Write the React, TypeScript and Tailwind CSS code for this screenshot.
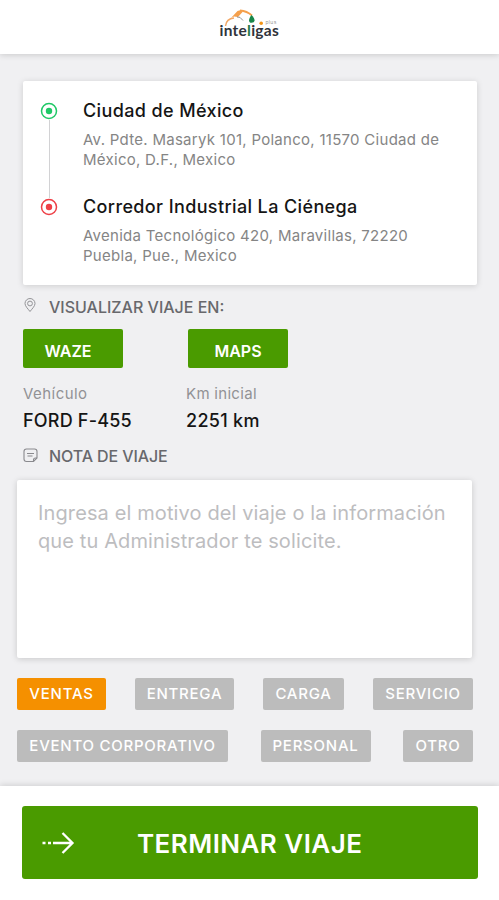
import React from 'react';
import clsx from 'clsx';

interface Stop {
  name: string;
  address: string[];
  color: string;
}

const stops: Stop[] = [
  {
    name: 'Ciudad de México',
    address: ['Av. Pdte. Masaryk 101, Polanco, 11570 Ciudad de', 'México, D.F., Mexico'],
    color: 'text-[#1fc866]',
  },
  {
    name: 'Corredor Industrial La Ciénega',
    address: ['Avenida Tecnológico 420, Maravillas, 72220', 'Puebla, Pue., Mexico'],
    color: 'text-[#ee3f46]',
  },
];

const reasons = [
  [
    { label: 'VENTAS', width: 'w-[89px]', active: true },
    { label: 'ENTREGA', width: 'w-[99px]' },
    { label: 'CARGA', width: 'w-[81px]' },
    { label: 'SERVICIO', width: 'w-[100px]' },
  ],
  [
    { label: 'EVENTO CORPORATIVO', width: 'w-[211px]' },
    { label: 'PERSONAL', width: 'w-[110px]' },
    { label: 'OTRO', width: 'w-[70px]' },
  ],
];

function Logo() {
  return (
    <div className="flex h-[34px] w-[60px] flex-col">
      <div className="flex h-[19px] items-end">
        <svg className="shrink-0" width="43" height="19" viewBox="0 0 43 19" fill="none">
          <path d="M5.500 19C6 14 8.500 11.500 14 11" stroke="#f3a866" strokeWidth="1.500" />
          <path d="M11 11L17.500 4L21 3L22.500 5L18 10L14 9.500Z" fill="#f5a04c" />
          <path d="M20 3.500Q27 4 32 8.500" stroke="#f5a04c" strokeWidth="1.800" />
          <path d="M17 10Q20 9 23 13.500" stroke="#888" strokeWidth="0.900" />
          <path d="M31.500 8C36.500 13 34.500 15.800 31.500 15.800C28.500 15.800 28 12.500 31.500 8Z" fill="#17864a" />
          <circle cx="41.200" cy="16.300" r="1.800" fill="#f39416" />
        </svg>
        <span className="mb-[2px] ml-[3px] text-[5px] leading-[4px] tracking-[0.3px] text-[#999]">plus</span>
      </div>
      <span className="-mt-[2px] font-['Lato',sans-serif] text-[15.500px] leading-3 font-bold tracking-[0.25px] whitespace-nowrap text-[#30343b]">
        inte<span className="text-[#267b49]">l</span>igas
      </span>
    </div>
  );
}

function StopMarker({ color }: { color: string }) {
  return (
    <svg className={clsx('block shrink-0', color)} width="18" height="18" viewBox="0 0 18 18" fill="none">
      <circle cx="9" cy="9" r="7.500" stroke="currentColor" strokeWidth="1.500" />
      <circle cx="9" cy="9" r="3.200" fill="currentColor" />
    </svg>
  );
}

function PinIcon() {
  return (
    <svg className="-mt-[3px]" width="12" height="15" viewBox="0 0 12 15" fill="none" stroke="#949498" strokeWidth="1">
      <path d="M6 13.500C3.500 10.300 1 8 1 5.500A5 5 0 0 1 11 5.500C11 8 8.500 10.300 6 13.500Z" />
      <circle cx="6" cy="5.500" r="2.400" />
    </svg>
  );
}

function NoteIcon() {
  return (
    <svg className="-mt-px" width="15" height="15" viewBox="0 0 15 15" fill="none" stroke="#8a8a8e" strokeWidth="1.100">
      <path d="M3.500 1H11.500Q14 1 14 3.500V10L10.500 13.500H3.500Q1 13.500 1 11V3.500Q1 1 3.500 1Z" />
      <path d="M10.500 13.500V12Q10.500 10 12.500 10H14M4 5.500H11M4.500 8H9.500" />
    </svg>
  );
}

function DottedArrow() {
  return (
    <svg width="33" height="24" viewBox="0 0 33 24" fill="none" stroke="#fff" strokeWidth="2.300">
      <path d="M0.500 12H3.500M6 12H9M11 12H30.500M20.500 2L30.500 12L20.500 22" />
    </svg>
  );
}

export default function App() {
  return (
    <div className="flex h-[900px] w-[499px] flex-col overflow-hidden bg-[#f0f0f2] font-['Inter',sans-serif]">
      <header className="flex h-[54px] shrink-0 justify-center bg-white pt-[7px] shadow-[0_1px_6px_rgba(0,0,0,0.16)]">
        <Logo />
      </header>

      <main className="h-[732px] shrink-0">
        <section className="mt-[27px] ml-[23px] flex h-[204px] w-[454px] rounded-[2px] bg-white pt-[21px] pl-[17px] shadow-[0_1px_6px_rgba(0,0,0,0.15)]">
          <div className="flex w-[18px] flex-col items-center">
            <StopMarker color={stops[0].color} />
            <div className="h-[78px] w-px bg-[#d2d2d4]" />
            <StopMarker color={stops[1].color} />
          </div>
          <div className="ml-[25px] flex flex-col">
            {stops.map((stop) => (
              <div key={stop.name} className="h-24 shrink-0">
                <h2 className="h-7 text-[18px] leading-[18px] font-medium tracking-[0.38px] whitespace-nowrap text-[#151515]">
                  {stop.name}
                </h2>
                {stop.address.map((line) => (
                  <p key={line} className="text-[15px] leading-5 tracking-[0.28px] whitespace-nowrap text-[#858585]">
                    {line}
                  </p>
                ))}
              </div>
            ))}
          </div>
        </section>

        <div className="mt-3 ml-6 flex h-5 items-center text-[16px] font-medium text-[#68686c]">
          <span className="w-[25px]"><PinIcon /></span>
          <span>VISUALIZAR VIAJE EN:</span>
        </div>

        <div className="mt-3 ml-[23px] flex gap-[65px]">
          {['WAZE', 'MAPS'].map((app) => (
            <button
              key={app}
              className="h-[39px] w-[100px] rounded-[2px] bg-[#4a9b00] pt-1 pr-[10px] text-[16px] font-semibold text-white last:pr-0"
            >
              {app}
            </button>
          ))}
        </div>

        <div className="mt-4 ml-[23px] flex">
          <div className="w-[163px]">
            <p className="text-[15px] leading-5 tracking-[0.45px] text-[#929295]">Vehículo</p>
            <p className="mt-[5px] text-[18px] leading-6 font-medium tracking-[0.2px] text-[#151515]">FORD F-455</p>
          </div>
          <div>
            <p className="text-[15px] leading-5 tracking-[0.3px] text-[#929295]">Km inicial</p>
            <p className="mt-[5px] text-[18px] leading-6 font-medium tracking-[0.3px] text-[#151515]">2251 km</p>
          </div>
        </div>

        <div className="mt-[13px] ml-[23px] flex h-5 items-center text-[16px] font-medium text-[#68686c]">
          <span className="w-[26px]"><NoteIcon /></span>
          <span className="tracking-[-0.1px]">NOTA DE VIAJE</span>
        </div>

        <div className="mt-[14px] ml-[17px] h-[178px] w-[455px] rounded-[2px] bg-white pt-[19px] pl-[21px] text-[20px] leading-7 tracking-[0.12px] whitespace-nowrap text-[#bdbdbf] shadow-[0_1px_6px_rgba(0,0,0,0.17)]">
          <p>Ingresa el motivo del viaje o la información</p>
          <p>que tu Administrador te solicite.</p>
        </div>

        <div className="mt-5 ml-[17px] flex w-[456px] flex-col gap-5">
          {reasons.map((row) => (
            <div key={row[0].label} className="flex justify-between">
              {row.map((reason) => (
                <button
                  key={reason.label}
                  className={clsx(
                    'h-8 rounded-[2px] text-[15px] font-medium tracking-[0.75px] whitespace-nowrap text-white',
                    reason.width,
                    reason.active ? 'bg-[#f59000]' : 'bg-[#bcbcbc]'
                  )}
                >
                  {reason.label}
                </button>
              ))}
            </div>
          ))}
        </div>
      </main>

      <footer className="h-[114px] shrink-0 bg-white pt-5 pl-[22px] shadow-[0_-1px_6px_rgba(0,0,0,0.14)]">
        <button className="flex h-[73px] w-[456px] items-center rounded-[3px] bg-[#4a9b00] pl-5 text-white">
          <DottedArrow />
          <span className="ml-[62px] pt-px text-[26px] font-semibold tracking-[0.45px] whitespace-nowrap">TERMINAR VIAJE</span>
        </button>
      </footer>
    </div>
  );
}
